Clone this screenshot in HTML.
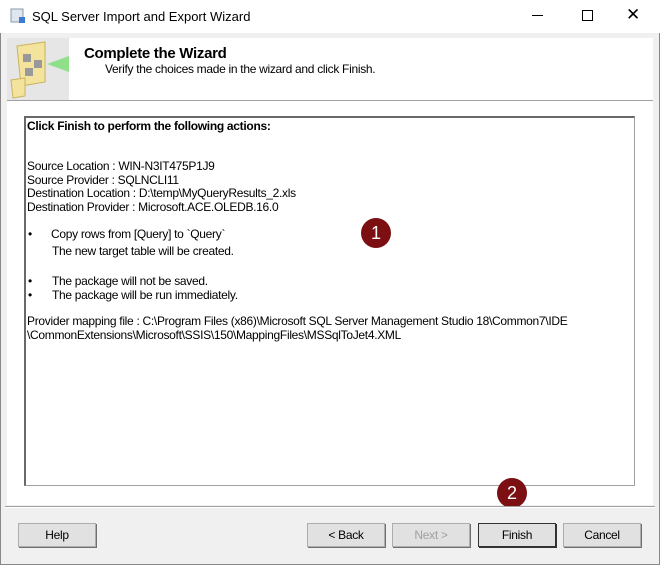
<!DOCTYPE html>
<html><head><style>
body{margin:0;width:660px;height:565px;overflow:hidden;background:#f0f0f0;font-family:"Liberation Sans",Arial,sans-serif;position:relative}
.a{position:absolute}
.t{font-size:12px;letter-spacing:-0.3px;color:#000;white-space:nowrap}
.btn{position:absolute;top:523px;height:22px;width:76px;background:#e1e1e1;border:1px solid #adadad;box-shadow:1px 1px 0 #707070;font-size:12px;text-align:center;line-height:22px;letter-spacing:-0.3px}
.badge{position:absolute;width:30px;height:30px;border-radius:50%;background:#7b0f12;color:#fff;font-size:18px;text-align:center;line-height:30px}
</style></head><body>
<div class="a" style="left:0;top:0;width:660px;height:33px;background:#fff"></div>
<svg class="a" style="left:10px;top:8px" width="16" height="16"><rect x="1" y="1" width="12" height="13" fill="#dfe6ee" stroke="#8899aa"/><rect x="9" y="9" width="6" height="6" fill="#3a7bd5"/></svg>
<div class="a" style="left:32px;top:9px;font-size:13px;color:#000">SQL Server Import and Export Wizard</div>
<div class="a" style="left:532px;top:15px;width:11px;height:1px;background:#000"></div>
<div class="a" style="left:582px;top:10px;width:9px;height:9px;border:1px solid #000"></div>
<div class="a" style="left:626px;top:5px;font-size:17px;color:#000">✕</div>
<div class="a" style="left:0;top:33px;width:1px;height:532px;background:#888"></div>
<div class="a" style="left:659px;top:33px;width:1px;height:532px;background:#888"></div>
<div class="a" style="left:7px;top:38px;width:646px;height:62px;background:#fff"></div>
<div class="a" style="left:7px;top:38px;width:62px;height:62px;background:#e6e6e6"></div>
<svg class="a" style="left:7px;top:38px" width="62" height="62"><polygon points="10,8 38,4 38,44 14,48" fill="#f3e39c" stroke="#c8b460"/><rect x="16" y="16" width="8" height="8" fill="#999"/><rect x="27" y="22" width="8" height="8" fill="#999"/><rect x="18" y="30" width="8" height="8" fill="#999"/><polygon points="4,42 18,40 18,58 6,60" fill="#f3e39c" stroke="#c8b460"/><polygon points="40,26 62,18 62,34" fill="#8ee08a"/></svg>
<div class="a" style="left:84px;top:45px;font-size:15px;font-weight:bold;letter-spacing:-0.3px">Complete the Wizard</div>
<div class="a t" style="left:105px;top:62px">Verify the choices made in the wizard and click Finish.</div>
<div class="a" style="left:7px;top:100px;width:646px;height:1px;background:#a0a0a0"></div>
<div class="a" style="left:7px;top:101px;width:646px;height:404px;background:#fff"></div>
<div class="a" style="left:24px;top:116px;width:608px;height:367px;border:1px solid #a0a0a0;border-top:2px solid #696969;border-left:2px solid #696969;background:#fff"></div>
<div class="a t" style="left:27px;top:119px;font-weight:bold;font-size:12px">Click Finish to perform the following actions:</div>
<div class="a t" style="left:27px;top:160px;line-height:13.7px">Source Location : WIN-N3IT475P1J9<br>Source Provider : SQLNCLI11<br>Destination Location : D:\temp\MyQueryResults_2.xls<br>Destination Provider : Microsoft.ACE.OLEDB.16.0</div>
<div class="a t" style="left:28px;top:227px">•</div>
<div class="a t" style="left:51px;top:227px">Copy rows from [Query] to `Query`</div>
<div class="a t" style="left:52px;top:244px">The new target table will be created.</div>
<div class="a t" style="left:28px;top:274px;line-height:14px">•<br>•</div>
<div class="a t" style="left:52px;top:274px;line-height:14px">The package will not be saved.<br>The package will be run immediately.</div>
<div class="a t" style="left:27px;top:315px;line-height:13.5px">Provider mapping file : C:\Program Files (x86)\Microsoft SQL Server Management Studio 18\Common7\IDE<br>\CommonExtensions\Microsoft\SSIS\150\MappingFiles\MSSqlToJet4.XML</div>
<div class="badge" style="left:361px;top:218px">1</div>
<div class="badge" style="left:497px;top:478px">2</div>
<div class="a" style="left:5px;top:506px;width:650px;height:1px;background:#a0a0a0"></div>
<div class="a" style="left:5px;top:507px;width:650px;height:1px;background:#fff"></div>
<div class="btn" style="left:18px">Help</div>
<div class="btn" style="left:307px">&lt; Back</div>
<div class="btn" style="left:392px;color:#a0a0a0">Next &gt;</div>
<div class="btn" style="left:478px;border-color:#333;box-shadow:1px 1px 0 #333">Finish</div>
<div class="btn" style="left:563px">Cancel</div>
<div class="a" style="left:0;top:564px;width:660px;height:1px;background:#888"></div>
</body></html>
